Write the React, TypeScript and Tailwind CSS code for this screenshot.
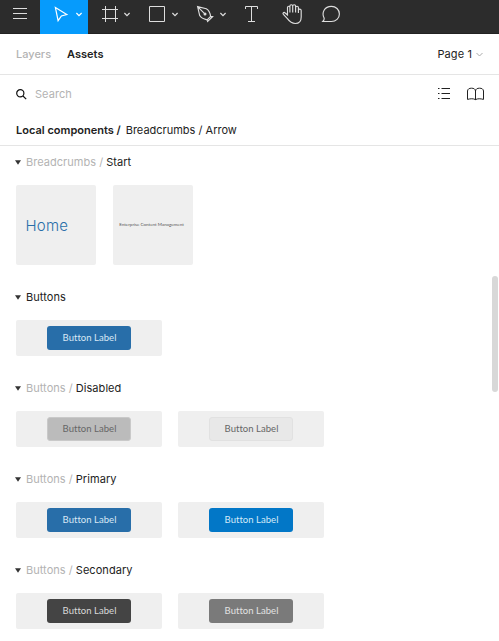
import type { ReactNode } from "react";

function Tool({ active = false, wide = false, children }: { active?: boolean; wide?: boolean; children: ReactNode }) {
  const w = wide ? 48 : 40;
  return (
    <button className={`block h-[34px] shrink-0 ${active ? "bg-[#069bfc] text-white" : "text-[#dedede]"}`}>
      <svg width={w} height="34" viewBox={`0 0 ${w} 34`} fill="none" stroke="currentColor" strokeWidth="1">
        {children}
        {wide && <path d="M36.4 13l2.6 2.6 2.6-2.6" strokeWidth="1.2" />}
      </svg>
    </button>
  );
}

function Toolbar() {
  return (
    <header className="flex h-[34px] shrink-0 border-b border-[#222] bg-[#2c2c2c]">
      <Tool><path d="M13 8.5h14M13 13.5h14M13 18.5h14" /></Tool>
      <Tool active wide><path d="M15.4 7.5l11.4 7-5.4 1.4-3.3 4.8z" strokeWidth="1.2" /></Tool>
      <Tool wide><path d="M17.5 6v16M27.5 6v16M14 9.5h16M14 18.5h16" /></Tool>
      <Tool wide><path d="M13.5 6.5h15v15h-15z" /></Tool>
      <Tool wide>
        <path d="M13.6 6.6l8.7 2.1c2.3 1.2 3.8 4 4.3 7.7l-3.5 3.5c-3.5-.7-6.2-2-7.4-4.3zM13.8 6.8l6.3 6.3M23.1 19.9l.5 1.5 5-4.8-2-.2" strokeWidth="1.15" />
        <circle cx="21" cy="14" r="1.5" fill="currentColor" stroke="none" />
      </Tool>
      <Tool><path d="M15.500 9V6.500h12V9M21.500 6.500v15M18 21.500h7" transform="translate(-2 0)" /></Tool>
      <Tool>
        <path strokeWidth="1.15" d="M15.4 18.6l-4-4.2c-1.1-1.3.4-2.7 1.8-1.4l2.3 2V7.4c0-1.5 2.4-1.5 2.4 0V12.5M17.9 7.4V6c0-1.7 2.8-1.7 2.8 0V12.5M20.7 6c0-1.7 2.9-1.7 2.9 0V12.5M23.6 7.4c0-1.6 2.8-1.6 2.8 0V13M26.4 10c.4-1.3 2.8-1.1 2.8.6V17c0 4-2.3 6.5-5.9 6.5-3.7 0-5.6-1.7-7.9-4.9" />
      </Tool>
      <Tool><path strokeWidth="1.15" d="M10.8 21.5c1-1 1.5-2 1.4-3.2-3-5.7.3-12 7.2-12 4.4 0 8 3.3 8 7.7s-3.6 7.5-8 7.5z" /></Tool>
    </header>
  );
}

function Tabs() {
  return (
    <nav className="flex h-[41px] shrink-0 items-center border-b border-[#e5e5e5] px-4">
      <span className="w-[51px] font-medium text-[#b3b3b3]">Layers</span>
      <span className="font-semibold tracking-[0.02px] text-[#222]">Assets</span>
      <span className="ml-auto tracking-[0.1px]">Page 1</span>
      <svg className="ml-[4px]" width="7" height="5" viewBox="0 0 7 5" fill="none" stroke="#aaa">
        <path d="M.5 1l3 3 3-3" />
      </svg>
    </nav>
  );
}

function SearchBar() {
  return (
    <div className="flex h-[38px] shrink-0 items-center pr-[15px] pl-[16px]">
      <svg width="11" height="11" viewBox="0 0 11 11" fill="none" stroke="#111" strokeWidth="1.2">
        <circle cx="4.3" cy="4.3" r="3.6" />
        <path d="M7 7l3.2 3.2" />
      </svg>
      <span className="ml-2 tracking-[0.05px] text-[#b3b3b3]">Search</span>
      <svg className="ml-auto" width="14" height="12" viewBox="0 0 14 12" stroke="#222">
        <path d="M1 .5h1.5M4.5 .5h8.5M1 5.5h1.5M4.5 5.5h8.5M1 10.5h1.5M4.5 10.5h8.5" />
      </svg>
      <svg className="ml-[16px]" width="17" height="14" viewBox="0 0 17 14" fill="none" stroke="#222">
        <path d="M8.5 13V4C8.3 2 6.8 1.2 4.5 1.2S.7 2 .5 4v8.4c3.2-.8 5.5-1 8 .2 2.5-1.2 4.8-1 8-.2V4c-.2-2-1.7-2.8-4-2.8S8.7 2 8.5 4" />
      </svg>
    </div>
  );
}

function Heading({ parent, name }: { parent?: string; name: string }) {
  return (
    <h2 className="mb-[7px] flex h-8 items-center pl-[15px]">
      <svg className="mr-[5px]" width="6" height="5" viewBox="0 0 6 5" fill="#333">
        <path d="M0 .3h6L3 4.7z" />
      </svg>
      {parent && <span className="mr-[3px] tracking-[0.03px] whitespace-pre text-[#b3b3b3]">{parent} /</span>}
      <span className="tracking-[0.06px] text-[#222]">{name}</span>
    </h2>
  );
}

function ButtonTile({ look }: { look: string }) {
  return (
    <div className="flex h-9 w-[146px] items-center justify-center rounded-[2px] bg-[#efefef]">
      <div className={`flex h-6 w-[84px] items-center justify-center rounded-[3px] pl-px font-[Lato,'Open_Sans',sans-serif] text-[9.5px] tracking-[0.04px] ${look}`}>
        Button Label
      </div>
    </div>
  );
}

const groups = [
  { name: "Buttons", looks: ["bg-[#286ea9] text-[#d9e8f5]"] },
  { parent: "Buttons", name: "Disabled", looks: ["border border-[#c9c9c9] bg-[#bbbbbb] text-[#666]", "border border-[#e1e1e1] bg-[#e8e8e8] text-[#666]"] },
  { parent: "Buttons", name: "Primary", looks: ["bg-[#286ea9] text-[#d9e8f5]", "bg-[#0277c7] text-[#d5eaf8]"] },
  { parent: "Buttons", name: "Secondary", looks: ["bg-[#444444] text-[#dadada]", "bg-[#7a7a7a] text-[#e2e2e2]"] },
];

export default function App() {
  return (
    <div className="relative flex h-[641px] w-[499px] flex-col overflow-hidden bg-white font-[Inter,sans-serif] text-[11px] leading-4 text-[#222]">
      <Toolbar />
      <Tabs />
      <SearchBar />
      <div className="flex h-[33px] shrink-0 items-center border-b border-[#e5e5e5] px-4 pt-[2px]">
        <span className="mr-[5px] font-semibold">Local components /</span>
        <span>Breadcrumbs / Arrow</span>
      </div>
      <main>
        <section className="mb-4">
          <Heading parent="Breadcrumbs" name="Start" />
          <div className="flex gap-[17px] pl-4">
            <div className="flex h-20 w-20 items-center rounded-[2px] bg-[#efefef] pt-px pl-[9.5px] text-[15px] font-light tracking-[0.25px] text-[#286ea9]">Home</div>
            <div className="flex h-20 w-20 items-center justify-center rounded-[2px] bg-[#efefef] pr-[3px] font-[Lato,sans-serif] text-[4.5px] whitespace-nowrap text-[#555]">
              Enterprise Content Management
            </div>
          </div>
        </section>
        {groups.map((g) => (
          <section key={g.name} className="mb-4">
            <Heading parent={g.parent} name={g.name} />
            <div className="flex gap-4 pl-4">
              {g.looks.map((look) => <ButtonTile key={look} look={look} />)}
            </div>
          </section>
        ))}
      </main>
      <div className="absolute top-[276px] left-[492px] h-[116px] w-[6px] rounded-full bg-[#d8d8d8]" />
    </div>
  );
}
